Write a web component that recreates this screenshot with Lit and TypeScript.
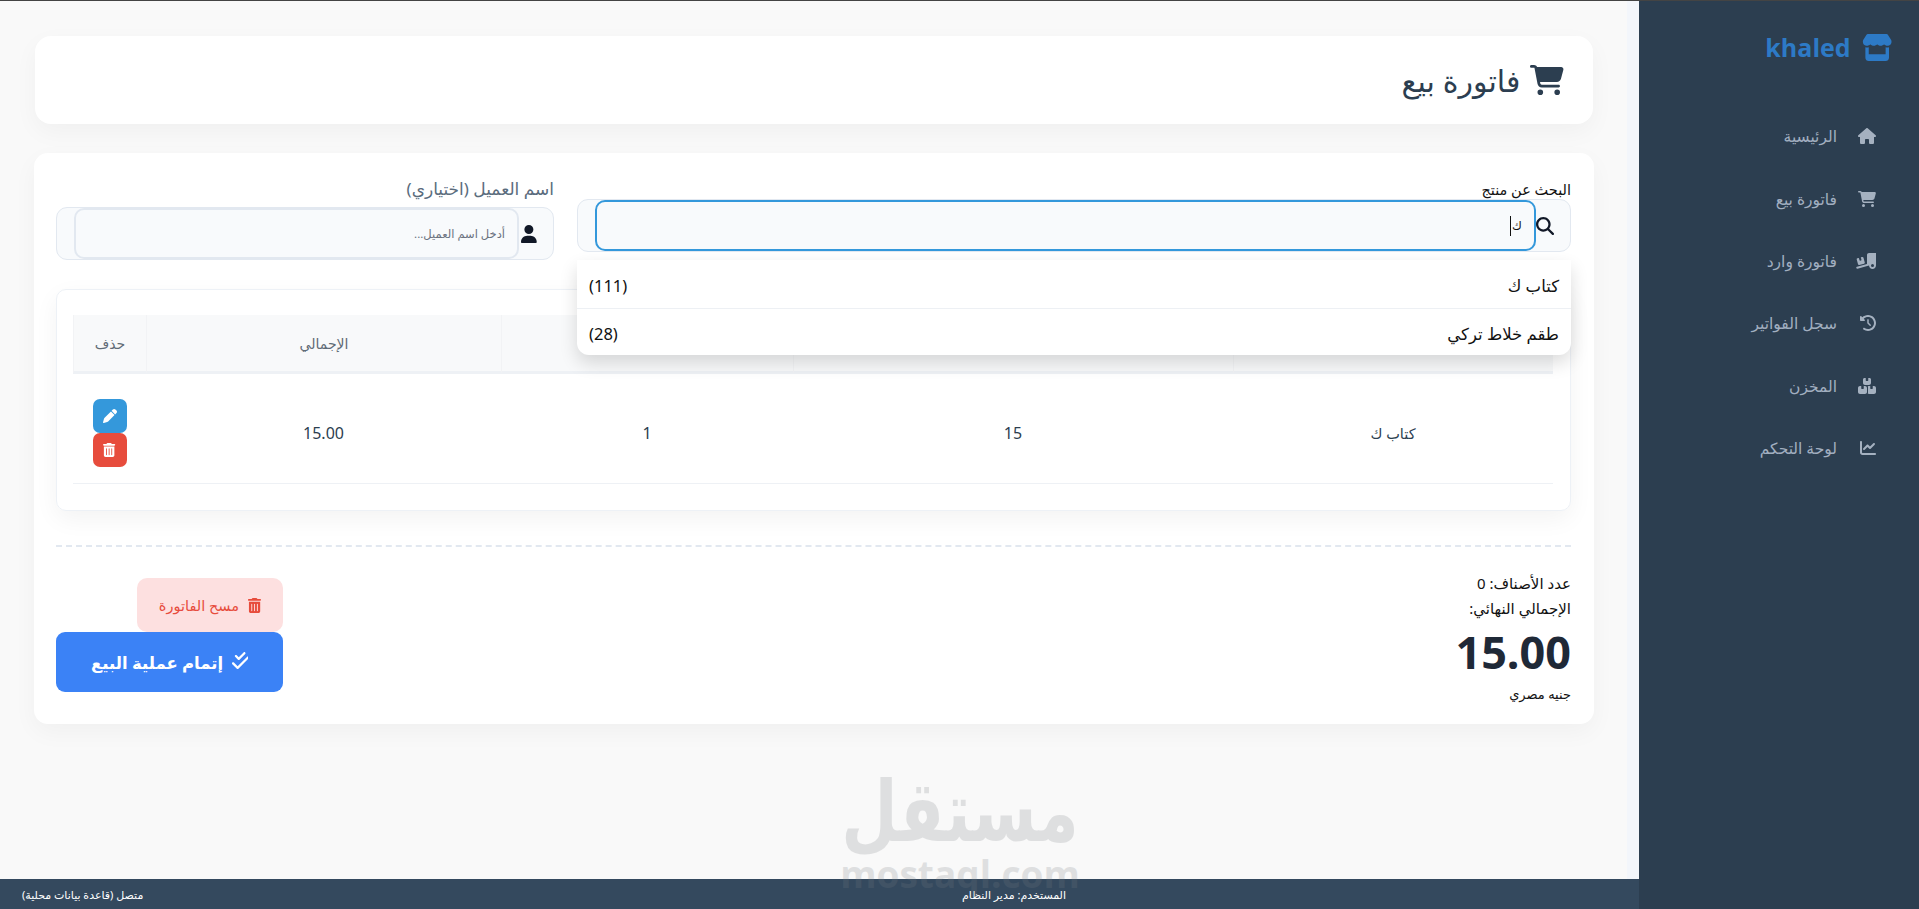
import { LitElement, html, css, svg } from "lit";
import { customElement } from "lit/decorators.js";

const P: Record<string, [number, string]> = {
  cart: [576, "M0 24C0 10.7 10.7 0 24 0H69.5c22 0 41.5 12.8 50.6 32h411c26.3 0 45.5 25 38.6 50.4l-41 152.3c-8.5 31.4-37 53.3-69.5 53.3H170.7l5.4 28.5c2.2 11.3 12.1 19.5 23.6 19.5H488c13.3 0 24 10.7 24 24s-10.7 24-24 24H199.7c-34.6 0-64.3-24.6-70.7-58.5L77.4 54.5c-.7-3.8-4-6.5-7.9-6.5H24C10.7 48 0 37.3 0 24zM128 464a48 48 0 1 1 96 0 48 48 0 1 1-96 0zm336-48a48 48 0 1 1 0 96 48 48 0 1 1 0-96z"],
  search: [512, "M416 208c0 45.9-14.9 88.3-40 122.7L502.6 457.4c12.5 12.5 12.5 32.8 0 45.3s-32.8 12.5-45.3 0L330.7 376c-34.4 25.2-76.8 40-122.7 40C93.1 416 0 322.9 0 208S93.1 0 208 0S416 93.1 416 208zM208 352a144 144 0 1 0 0-288 144 144 0 1 0 0 288z"],
  user: [448, "M224 256A128 128 0 1 0 224 0a128 128 0 1 0 0 256zm-45.7 48C79.8 304 0 383.8 0 482.3C0 498.7 13.3 512 29.7 512H418.3c16.4 0 29.7-13.3 29.7-29.7C448 383.8 368.2 304 269.7 304H178.3z"],
  home: [576, "M575.8 255.5c0 18-15 32.1-32 32.1h-32l.7 160.2c0 2.7-.2 5.4-.5 8.1V472c0 22.1-17.9 40-40 40H456c-1.1 0-2.2 0-3.3-.1c-1.4 .1-2.8 .1-4.2 .1H416 392c-22.1 0-40-17.9-40-40V448 384c0-17.7-14.3-32-32-32H256c-17.7 0-32 14.3-32 32v64 24c0 22.1-17.9 40-40 40H160 128.1c-1.5 0-3-.1-4.5-.2c-1.2 .1-2.4 .2-3.6 .2H104c-22.1 0-40-17.9-40-40V360c0-.9 0-1.9 .1-2.8V287.6H32c-18 0-32-14-32-32.1c0-9 3-17 10-24L266.4 8c7-7 15-8 22-8s15 2 21 7L564.8 231.5c8 7 12 15 11 24z"],
  trash: [448, "M135.2 17.7C140.6 6.8 151.7 0 163.8 0H284.2c12.1 0 23.2 6.8 28.6 17.7L320 32h96c17.7 0 32 14.3 32 32s-14.3 32-32 32H32C14.3 96 0 81.7 0 64S14.3 32 32 32h96l7.2-14.3zM32 128H416V448c0 35.3-28.7 64-64 64H96c-35.3 0-64-28.7-64-64V128zm96 64c-8.8 0-16 7.2-16 16V432c0 8.8 7.2 16 16 16s16-7.2 16-16V208c0-8.8-7.2-16-16-16zm96 0c-8.8 0-16 7.2-16 16V432c0 8.8 7.2 16 16 16s16-7.2 16-16V208c0-8.8-7.2-16-16-16zm96 0c-8.8 0-16 7.2-16 16V432c0 8.8 7.2 16 16 16s16-7.2 16-16V208c0-8.8-7.2-16-16-16z"],
  pen: [512, "M362.7 19.3L314.3 67.7 444.3 197.7l48.4-48.4c25-25 25-65.5 0-90.5L453.3 19.3c-25-25-65.5-25-90.5 0zm-71 71L58.6 323.5c-10.4 10.4-18 23.3-22.2 37.4L1 481.2C-1.5 489.7 .8 498.8 7 505s15.3 8.5 23.7 6.1l120.3-35.4c14.1-4.2 27-11.8 37.4-22.2L421.7 220.3 291.7 90.3z"],
  history: [512, "M75 75L41 41C25.9 25.9 0 36.6 0 57.9V168c0 13.3 10.7 24 24 24H134.1c21.4 0 32.1-25.9 17-41l-30.8-30.8C155 85.5 203 64 256 64c106 0 192 86 192 192s-86 192-192 192c-40.8 0-78.6-12.7-109.7-34.4c-14.5-10.1-34.4-6.6-44.6 7.9s-6.6 34.4 7.9 44.6C151.2 495 201.7 512 256 512c141.4 0 256-114.6 256-256S397.4 0 256 0C185.3 0 121.3 28.7 75 75zm181 53c-13.3 0-24 10.7-24 24V256c0 6.4 2.5 12.5 7 17l72 72c9.4 9.4 24.6 9.4 33.9 0s9.4-24.6 0-33.9l-65-65V152c0-13.3-10.7-24-24-24z"],
  chart: [512, "M64 64c0-17.7-14.3-32-32-32S0 46.3 0 64V400c0 44.2 35.8 80 80 80H480c17.7 0 32-14.3 32-32s-14.3-32-32-32H80c-8.8 0-16-7.2-16-16V64zm406.6 86.6c12.5-12.5 12.5-32.8 0-45.3s-32.8-12.5-45.3 0L320 210.7l-57.4-57.4c-12.5-12.5-32.8-12.5-45.3 0l-112 112c-12.5 12.5-12.5 32.8 0 45.3s32.8 12.5 45.3 0L240 221.3l57.4 57.4c12.5 12.5 32.8 12.5 45.3 0l128-128z"],
  boxes: [576, "M248 0H208c-26.5 0-48 21.5-48 48V160c0 35.3 28.7 64 64 64H352c35.3 0 64-28.7 64-64V48c0-26.5-21.5-48-48-48H328V80c0 8.8-7.2 16-16 16H264c-8.8 0-16-7.2-16-16V0zM64 256c-35.3 0-64 28.7-64 64V448c0 35.3 28.7 64 64 64H224c35.3 0 64-28.7 64-64V320c0-35.3-28.7-64-64-64H184v80c0 8.8-7.2 16-16 16H120c-8.8 0-16-7.2-16-16V256H64zM352 512H512c35.3 0 64-28.7 64-64V320c0-35.3-28.7-64-64-64H472v80c0 8.8-7.2 16-16 16H408c-8.8 0-16-7.2-16-16V256H352c-15 0-28.8 5.1-39.7 13.8c4.9 10.4 7.7 22 7.7 34.2V464c0 12.2-2.8 23.8-7.7 34.2C323.2 506.9 337 512 352 512z"],
  truck: [640, "M640 0V400c0 61.9-50.1 112-112 112c-61 0-110.5-48.7-112-109.3L48.4 502.9c-17.1 4.6-34.6-5.4-39.3-22.5s5.4-34.6 22.5-39.3L352 353.8V64c0-35.3 28.7-64 64-64H640zM576 400a48 48 0 1 0 -96 0 48 48 0 1 0 96 0zM23.1 207.7c-4.6-17.1 5.6-34.6 22.6-39.2l46.4-12.4 20.7 77.3c2.3 8.5 11.1 13.6 19.6 11.3l30.9-8.3c8.5-2.3 13.6-11.1 11.3-19.6l-20.7-77.3 46.4-12.4c17.1-4.6 34.6 5.6 39.2 22.6l41.4 154.5c4.6 17.1-5.6 34.6-22.6 39.2L103.7 384.9c-17.1 4.6-34.6-5.6-39.2-22.6L23.1 207.7z"],
  store: [576, "M547.6 103.8L490.3 13.1C485.2 5 476.1 0 466.4 0H109.6C99.9 0 90.8 5 85.7 13.1L28.3 103.8c-29.6 46.8-3.4 111.9 51.9 119.4c4 .5 8.1 .8 12.1 .8c26.1 0 49.3-11.4 65.2-29c15.9 17.6 39.1 29 65.2 29c26.1 0 49.3-11.4 65.2-29c15.9 17.6 39.1 29 65.2 29c26.2 0 49.3-11.4 65.2-29c16 17.6 39.1 29 65.2 29c4.1 0 8.1-.3 12.1-.8c55.5-7.4 81.8-72.5 52.1-119.4zM499.7 254.9l-.1 0c-5.3 .7-10.7 1.1-16.2 1.1c-12.4 0-24.3-1.9-35.4-5.3V384H128V250.6c-11.2 3.5-23.2 5.4-35.6 5.4c-5.5 0-11-.4-16.3-1.1l-.1 0c-4.1-.6-8.1-1.3-12-2.3V384v64c0 35.3 28.7 64 64 64H448c35.3 0 64-28.7 64-64V384 252.6c-4 1-8 1.8-12.3 2.3z"],
  check: [448, "M374.6 86.6c12.5-12.5 12.5-32.8 0-45.3s-32.8-12.5-45.3 0L192 178.7l-57.4-57.4c-12.5-12.5-32.8-12.5-45.3 0s-12.5 32.8 0 45.3l80 80c12.5 12.5 32.8 12.5 45.3 0l160-160zm96 128c12.5-12.5 12.5-32.8 0-45.3s-32.8-12.5-45.3 0L160 434.7 54.6 329.4c-12.5-12.5-32.8-12.5-45.3 0s-12.5 32.8 0 45.3l128 128c12.5 12.5 32.8 12.5 45.3 0l288-288z"],
};

const icon = (n: string, cls = "") => {
  const [w, d] = P[n];
  return html`<svg class="ic ${cls}" viewBox="0 0 ${w} 512" fill="currentColor">${svg`<path d=${d}></path>`}</svg>`;
};

const NAV: [string, string][] = [
  ["home", "الرئيسية"],
  ["cart", "فاتورة بيع"],
  ["truck", "فاتورة وارد"],
  ["history", "سجل الفواتير"],
  ["boxes", "المخزن"],
  ["chart", "لوحة التحكم"],
];

@customElement("app-root")
export class AppRoot extends LitElement {
  static styles = css`
    :host {
      display: block;
      width: 1919px;
      height: 909px;
      overflow: hidden;
      position: relative;
      direction: rtl;
      font-family: "Noto Sans", "DejaVu Sans", sans-serif;
      background: #f9f9f9;
      color: #2c3e50;
      border-top: 1px solid #444;
      box-sizing: border-box;
    }
    .ic { display: block; height: 1em; flex: none; }
    .layout { display: flex; height: 908px; }
    .side {
      width: 280px;
      flex: none;
      background: #2c3e50;
      display: flex;
      flex-direction: column;
      padding: 31px 27px 0 0;
      box-sizing: border-box;
    }
    .brand {
      display: flex;
      align-items: center;
      gap: 11px;
      color: #2d7ac6;
      font-size: 25px;
      font-weight: 700;
      height: 30px;
      font-family: "Open Sans", sans-serif;
      margin-bottom: 43px;
    }
    .brand .ic { font-size: 27px; }
    .nav { display: flex; flex-direction: column; margin-right: 16px; }
    .nav a {
      height: 62.4px;
      display: flex;
      align-items: center;
      color: #a2afc0;
      font-size: 15.5px;
    }
    .nav .slot { width: 39px; flex: none; font-size: 16px; color: #a5b1c0; }
    .body { flex: 1; display: flex; flex-direction: column; min-width: 0; position: relative; }
    .scroll {
      flex: 1;
      padding: 35px 34px 0 35px;
      border-right: 12px solid #f3f6fb;
      min-height: 0;
    }
    .title {
      height: 88px;
      background: #fff;
      border-radius: 16px;
      box-shadow: 0 8px 24px rgba(0, 0, 0, 0.04);
      display: flex;
      align-items: center;
      gap: 10px;
      padding: 0 29px;
      font-size: 30px;
      color: #2c3e50;
      margin-bottom: 29px;
    }
    .title .ic { font-size: 30px; }
    .card {
      background: #fff;
      border-radius: 14px;
      box-shadow: 0 8px 24px rgba(0, 0, 0, 0.04);
      margin: 0 -1px;
      padding: 26px 23px 0 22px;
      height: 571px;
      box-sizing: border-box;
    }
    .fields { display: flex; gap: 23px; align-items: flex-start; }
    .fsearch { width: 994px; flex: none; position: relative; }
    .fcust { flex: 1; }
    .lab1 { font-size: 14.5px; color: #111; line-height: 20px; }
    .lab2 { font-size: 17px; color: #5a6c7d; line-height: 20px; margin-bottom: 8px; }
    .group {
      display: flex;
      align-items: center;
      height: 53px;
      background: #f8fafc;
      border: 1px solid #e2e8f0;
      border-radius: 11px;
      box-sizing: border-box;
    }
    .g-ic { width: 34px; flex: none; display: flex; justify-content: flex-start; padding-right: 16px; box-sizing: border-box; font-size: 18px; color: #111827; }
    .fake {
      flex: 1;
      align-self: stretch;
      background: #f8fafc;
      border: 2px solid #e2e8f0;
      border-radius: 10px;
      display: flex;
      align-items: center;
      padding: 0 12px;
      font-size: 11.5px;
      color: #6b7280;
      margin-left: 17px;
    }
    .fake.on { border-color: #3498db; color: #111; font-size: 12px; }
    .caret { width: 1px; height: 20px; background: #111; margin-right: 1px; }
    .drop {
      position: absolute;
      top: 81px;
      left: 0;
      right: 0;
      background: #fff;
      border-radius: 0 0 12px 12px;
      box-shadow: 0 8px 18px rgba(0, 0, 0, 0.14);
      z-index: 3;
    }
    .drop div {
      height: 48px;
      box-sizing: border-box;
      display: flex;
      justify-content: space-between;
      align-items: center;
      padding: 2px 12px 0;
      font-size: 16.5px;
      color: #111;
    }
    .drop div + div { border-top: 1px solid #edf0f4; height: 47px; }
    .tcard {
      margin-top: 29px;
      height: 222px;
      box-sizing: border-box;
      border: 1px solid #edf1f6;
      border-radius: 10px;
      padding: 25px 17px 0;
      box-shadow: 0 8px 24px rgba(0, 0, 0, 0.05);
    }
    .grid { display: grid; grid-template-columns: 320px 440px 292px 355px 73px; }
    .th {
      height: 59px;
      background: #f8f9fa;
      border-bottom: 3px solid #eef1f5;
      box-sizing: border-box;
      padding-top: 1px;
      display: flex;
      align-items: center;
      justify-content: center;
      font-size: 14px;
      color: #5f6b76;
      border-left: 1px solid #f2f3f5;
    }
    .th:last-child { border-left: 0; }
    .td {
      height: 110px;
      box-sizing: border-box;
      padding-top: 8px;
      border-bottom: 1px solid #eef1f5;
      display: flex;
      align-items: center;
      justify-content: center;
      font-size: 14.5px;
      color: #2c3e50;
    }
    .num { font-size: 16px; }
    .actions { flex-direction: column; }
    .btn {
      width: 34px;
      height: 34px;
      border-radius: 7px;
      display: flex;
      align-items: center;
      justify-content: center;
      color: #fff;
      font-size: 14px;
    }
    .btn.edit { background: #3498db; }
    .btn.del { background: #e74c3c; }
    .foot {
      margin-top: 34px;
      border-top: 2px dashed #e2e8f0;
      padding-top: 24px;
      display: flex;
      justify-content: space-between;
      align-items: flex-start;
    }
    .tot { font-size: 15px; color: #111; line-height: 25px; }
    .big { font-size: 45px; font-weight: 700; color: #1f2937; line-height: 62px; text-align: right; }
    .cur { font-size: 13px; line-height: 20px; margin-top: 1px; }
    .btns { display: flex; flex-direction: column; align-items: flex-start; padding-top: 7px; }
    .clear {
      width: 146px;
      height: 54px;
      background: #fde0e0;
      color: #e74c3c;
      border-radius: 10px;
      display: flex;
      align-items: center;
      justify-content: center;
      gap: 9px;
      font-size: 14.5px;
    }
    .clear .ic { font-size: 15px; }
    .done {
      width: 227px;
      height: 60px;
      background: #3b82f6;
      color: #fff;
      border-radius: 9px;
      display: flex;
      align-items: center;
      justify-content: center;
      gap: 9px;
      font-size: 16.5px;
      font-weight: 700;
    }
    .done .ic { font-size: 18px; margin-top: -4px; }
    .status {
      height: 30px;
      flex: none;
      background: #34495e;
      color: #fff;
      font-size: 11px;
      display: flex;
      justify-content: space-between;
      align-items: center;
      padding: 0 573px 0 22px;
    }
    .mark {
      position: absolute;
      left: 835px;
      width: 250px;
      top: 769px;
      text-align: center;
      color: #787d82;
      opacity: 0.2;
      pointer-events: none;
      z-index: 5;
      direction: ltr;
    }
    .mark .ar { font-size: 65px; font-weight: 700; line-height: 84px; direction: rtl; transform: scaleY(1.3); font-family: "DejaVu Sans", sans-serif; }
    .mark .en { font-size: 37px; font-weight: 700; line-height: 40px; font-family: "Open Sans", sans-serif; }
  `;

  render() {
    return html`
      <div class="layout">
        <aside class="side">
          <div class="brand">${icon("store")}<span>khaled</span></div>
          <nav class="nav">
            ${NAV.map(([i, t]) => html`<a><span class="slot">${icon(i)}</span><span>${t}</span></a>`)}
          </nav>
        </aside>
        <div class="body">
          <div class="scroll">
            <div class="title">${icon("cart")}<span>فاتورة بيع</span></div>
            <div class="card">
              <div class="fields">
                <div class="fsearch">
                  <div class="lab1">البحث عن منتج</div>
                  <div class="group">
                    <span class="g-ic">${icon("search")}</span>
                    <div class="fake on"><span>ك</span><span class="caret"></span></div>
                  </div>
                  <div class="drop">
                    <div><span>كتاب ك</span><span dir="ltr">(111)</span></div>
                    <div><span>طقم خلاط تركي</span><span dir="ltr">(28)</span></div>
                  </div>
                </div>
                <div class="fcust">
                  <div class="lab2">اسم العميل (اختياري)</div>
                  <div class="group">
                    <span class="g-ic">${icon("user")}</span>
                    <div class="fake">أدخل اسم العميل...</div>
                  </div>
                </div>
              </div>
              <div class="tcard">
                <div class="grid">
                  <div class="th">المنتج</div>
                  <div class="th">السعر</div>
                  <div class="th">الكمية</div>
                  <div class="th">الإجمالي</div>
                  <div class="th">حذف</div>
                  <div class="td">كتاب ك</div>
                  <div class="td num">15</div>
                  <div class="td num">1</div>
                  <div class="td num">15.00</div>
                  <div class="td actions">
                    <span class="btn edit">${icon("pen")}</span>
                    <span class="btn del">${icon("trash")}</span>
                  </div>
                </div>
              </div>
              <div class="foot">
                <div class="tot">
                  <div>عدد الأصناف: 0</div>
                  <div>الإجمالي النهائي:</div>
                  <div class="big">15.00</div>
                  <div class="cur">جنيه مصري</div>
                </div>
                <div class="btns">
                  <div class="clear">${icon("trash")}<span>مسح الفاتورة</span></div>
                  <div class="done">${icon("check")}<span>إتمام عملية البيع</span></div>
                </div>
              </div>
            </div>
          </div>
          <div class="status">
            <span>المستخدم: مدير النظام</span>
            <span>متصل (قاعدة بيانات محلية)</span>
          </div>
        </div>
      </div>
      <div class="mark">
        <div class="ar">مستقل</div>
        <div class="en">mostaql.com</div>
      </div>
    `;
  }
}
